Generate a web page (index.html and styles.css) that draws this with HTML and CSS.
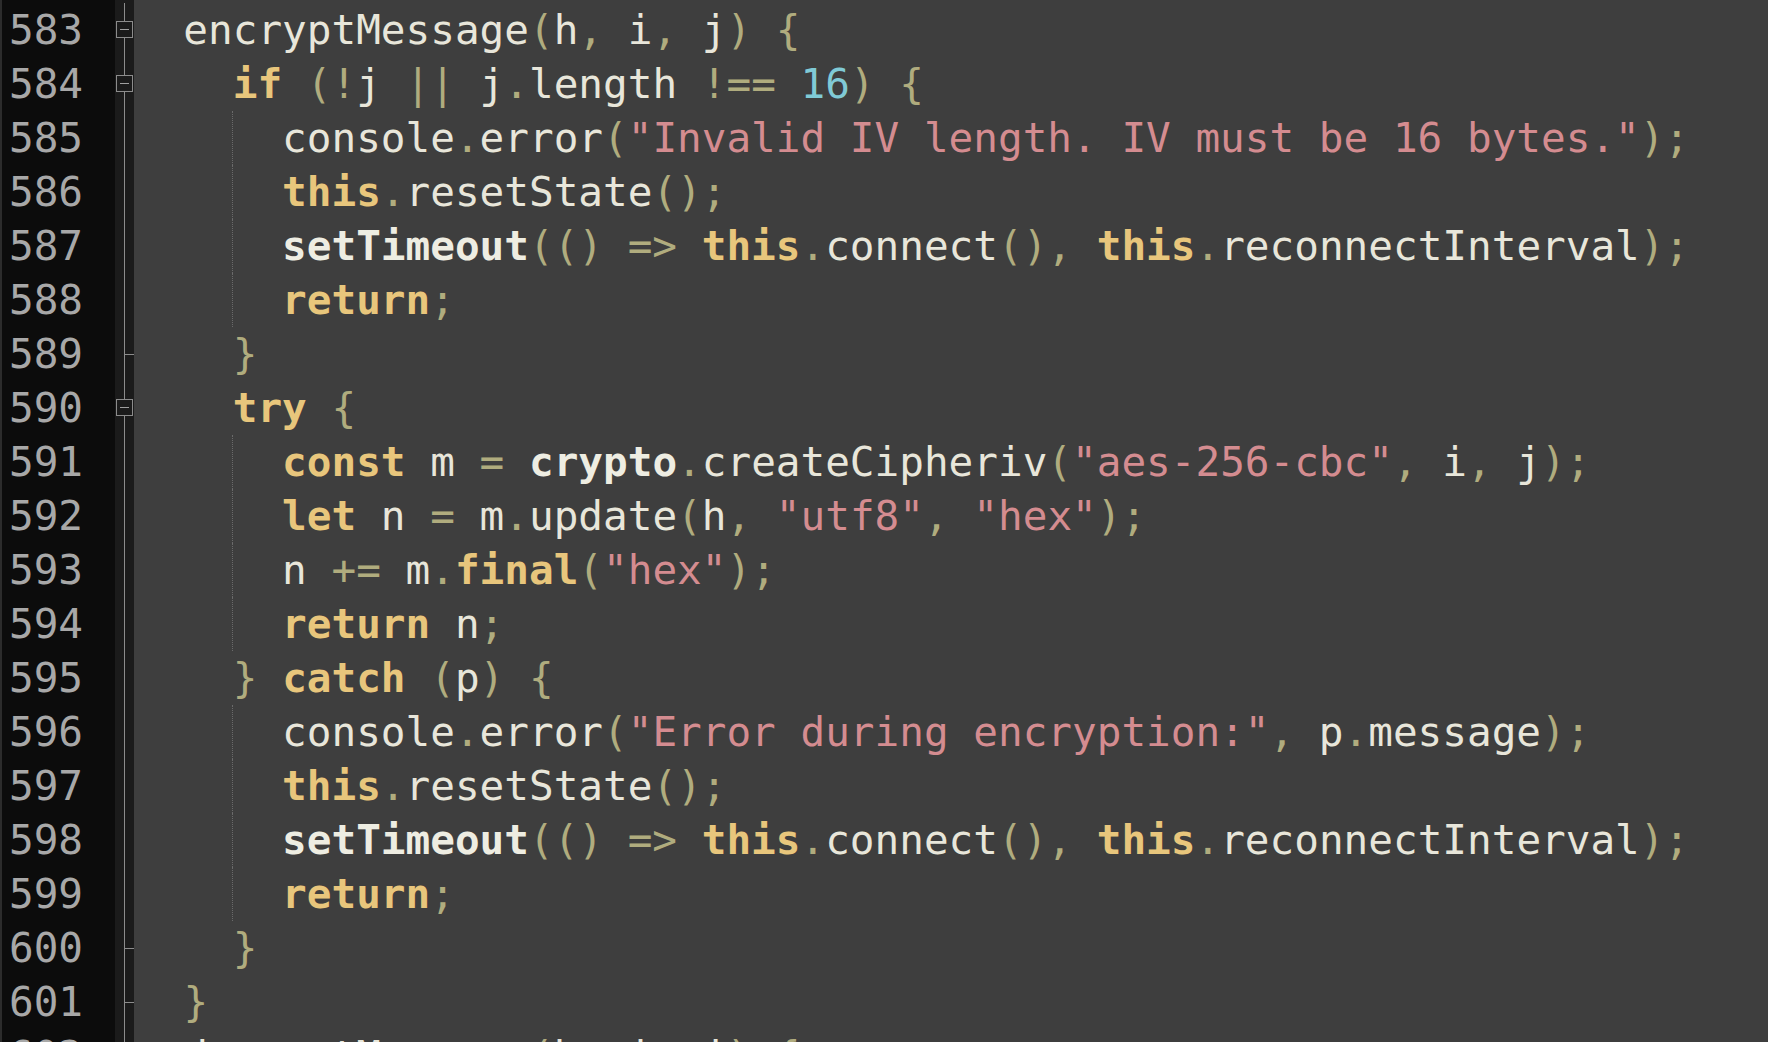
FILE: index.html
```html
<!DOCTYPE html>
<html>
<head>
<meta charset="utf-8">
<link rel="stylesheet" href="styles.css">
</head>
<body>
<div class="editor">
  <div class="row"><div class="ln">583</div><div class="fold"><span class="box"></span></div><div class="code">  encryptMessage<span class="p">(</span>h<span class="p">,</span> i<span class="p">,</span> j<span class="p">) {</span></div></div>
  <div class="row"><div class="ln">584</div><div class="fold"><span class="box"></span></div><div class="code">    <span class="k">if</span> <span class="p">(!</span>j <span class="p">||</span> j<span class="p">.</span>length <span class="p">!==</span> <span class="n">16</span><span class="p">) {</span></div></div>
  <div class="row"><div class="ln">585</div><div class="fold"></div><div class="code guide">      console<span class="p">.</span>error<span class="p">(</span><span class="s">"Invalid IV length. IV must be 16 bytes."</span><span class="p">);</span></div></div>
  <div class="row"><div class="ln">586</div><div class="fold"></div><div class="code guide">      <span class="k">this</span><span class="p">.</span>resetState<span class="p">();</span></div></div>
  <div class="row"><div class="ln">587</div><div class="fold"></div><div class="code guide">      <span class="b">setTimeout</span><span class="p">(() =&gt;</span> <span class="k">this</span><span class="p">.</span>connect<span class="p">(),</span> <span class="k">this</span><span class="p">.</span>reconnectInterval<span class="p">);</span></div></div>
  <div class="row"><div class="ln">588</div><div class="fold"></div><div class="code guide">      <span class="k">return</span><span class="p">;</span></div></div>
  <div class="row"><div class="ln">589</div><div class="fold end"></div><div class="code">    <span class="p">}</span></div></div>
  <div class="row"><div class="ln">590</div><div class="fold"><span class="box"></span></div><div class="code">    <span class="k">try</span> <span class="p">{</span></div></div>
  <div class="row"><div class="ln">591</div><div class="fold"></div><div class="code guide">      <span class="k">const</span> m <span class="p">=</span> <span class="b">crypto</span><span class="p">.</span>createCipheriv<span class="p">(</span><span class="s">"aes-256-cbc"</span><span class="p">,</span> i<span class="p">,</span> j<span class="p">);</span></div></div>
  <div class="row"><div class="ln">592</div><div class="fold"></div><div class="code guide">      <span class="k">let</span> n <span class="p">=</span> m<span class="p">.</span>update<span class="p">(</span>h<span class="p">,</span> <span class="s">"utf8"</span><span class="p">,</span> <span class="s">"hex"</span><span class="p">);</span></div></div>
  <div class="row"><div class="ln">593</div><div class="fold"></div><div class="code guide">      n <span class="p">+=</span> m<span class="p">.</span><span class="k">final</span><span class="p">(</span><span class="s">"hex"</span><span class="p">);</span></div></div>
  <div class="row"><div class="ln">594</div><div class="fold"></div><div class="code guide">      <span class="k">return</span> n<span class="p">;</span></div></div>
  <div class="row"><div class="ln">595</div><div class="fold"></div><div class="code">    <span class="p">}</span> <span class="k">catch</span> <span class="p">(</span>p<span class="p">) {</span></div></div>
  <div class="row"><div class="ln">596</div><div class="fold"></div><div class="code guide">      console<span class="p">.</span>error<span class="p">(</span><span class="s">"Error during encryption:"</span><span class="p">,</span> p<span class="p">.</span>message<span class="p">);</span></div></div>
  <div class="row"><div class="ln">597</div><div class="fold"></div><div class="code guide">      <span class="k">this</span><span class="p">.</span>resetState<span class="p">();</span></div></div>
  <div class="row"><div class="ln">598</div><div class="fold"></div><div class="code guide">      <span class="b">setTimeout</span><span class="p">(() =&gt;</span> <span class="k">this</span><span class="p">.</span>connect<span class="p">(),</span> <span class="k">this</span><span class="p">.</span>reconnectInterval<span class="p">);</span></div></div>
  <div class="row"><div class="ln">599</div><div class="fold"></div><div class="code guide">      <span class="k">return</span><span class="p">;</span></div></div>
  <div class="row"><div class="ln">600</div><div class="fold end"></div><div class="code">    <span class="p">}</span></div></div>
  <div class="row"><div class="ln">601</div><div class="fold end"></div><div class="code">  <span class="p">}</span></div></div>
  <div class="row"><div class="ln">602</div><div class="fold"><span class="box"></span></div><div class="code">  decryptMessage<span class="p">(</span>h<span class="p">,</span> i<span class="p">,</span> j<span class="p">) {</span></div></div>
</div>
</body>
</html>
```
FILE: styles.css
```css
html, body {
  margin: 0;
  padding: 0;
  height: 100%;
  overflow: hidden;
  background: #3e3e3e;
}

.editor {
  display: flex;
  flex-direction: column;
  padding-top: 3px;
  min-height: 100%;
  background: linear-gradient(to right, #2c2c2c 0, #2c2c2c 2px, #0c0c0c 2px, #0c0c0c 115px, #1b1b1b 115px, #1b1b1b 134px, #3e3e3e 134px);
  font-family: "DejaVu Sans Mono", "Liberation Mono", monospace;
  font-size: 41px;
  line-height: 54px;
}

.row {
  display: flex;
  height: 54px;
}

.ln {
  width: 115px;
  box-sizing: border-box;
  padding-left: 9px;
  color: #a8a8a8;
}

.fold {
  width: 19px;
  position: relative;
}

.fold::before {
  content: "";
  position: absolute;
  left: 9px;
  top: 0;
  bottom: 0;
  width: 1px;
  background: #8c8c8c;
}

.fold.end::after {
  content: "";
  position: absolute;
  left: 9px;
  right: 0;
  top: 27px;
  height: 1px;
  background: #8c8c8c;
}

.box {
  position: absolute;
  left: 1px;
  top: 18px;
  width: 15px;
  height: 15px;
  border: 1px solid #8c8c8c;
  background: #1b1b1b;
}

.box::after {
  content: "";
  position: absolute;
  left: 3px;
  right: 3px;
  top: 7px;
  height: 1px;
  background: #a0a0a0;
}

.code {
  flex: 1;
  white-space: pre;
  color: #e8e6da;
  position: relative;
}

.code.guide::before {
  content: "";
  position: absolute;
  left: 98px;
  top: 0;
  bottom: 0;
  border-left: 1px dotted #6a6a6a;
}

.p { color: #b0ac7e; }
.k { color: #e8c67c; font-weight: bold; }
.b { color: #eeede2; font-weight: bold; }
.s { color: #d48c90; }
.n { color: #80cad6; }
```
